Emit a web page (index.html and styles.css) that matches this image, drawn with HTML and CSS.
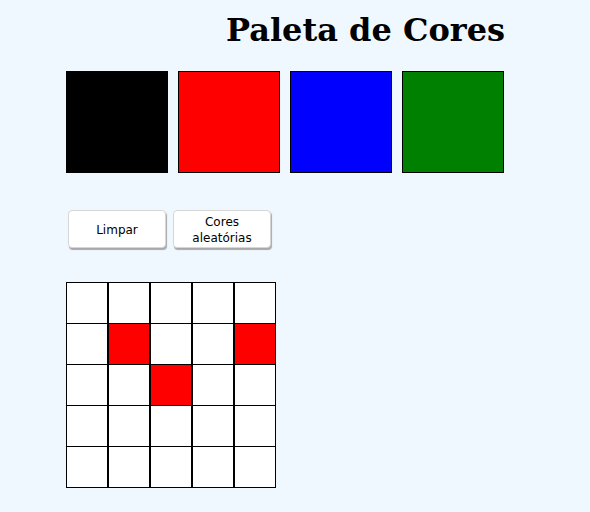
FILE: index.html
```html
<!DOCTYPE html>
<html lang="pt-BR">
<head>
<meta charset="utf-8">
<title>Paleta de Cores</title>
<link rel="stylesheet" href="styles.css">
</head>
<body>
<main class="page">
  <h1 class="title">Paleta de Cores</h1>
  <div class="palette">
    <div class="swatch black"></div>
    <div class="swatch red"></div>
    <div class="swatch blue"></div>
    <div class="swatch green"></div>
  </div>
  <div class="actions">
    <button class="btn" type="button">Limpar</button>
    <button class="btn" type="button">Cores aleatórias</button>
  </div>
  <div class="board">
    <div class="row"><div class="pixel"></div><div class="pixel"></div><div class="pixel"></div><div class="pixel"></div><div class="pixel"></div></div>
    <div class="row"><div class="pixel"></div><div class="pixel filled"></div><div class="pixel"></div><div class="pixel"></div><div class="pixel filled"></div></div>
    <div class="row"><div class="pixel"></div><div class="pixel"></div><div class="pixel filled"></div><div class="pixel"></div><div class="pixel"></div></div>
    <div class="row"><div class="pixel"></div><div class="pixel"></div><div class="pixel"></div><div class="pixel"></div><div class="pixel"></div></div>
    <div class="row"><div class="pixel"></div><div class="pixel"></div><div class="pixel"></div><div class="pixel"></div><div class="pixel"></div></div>
  </div>
</main>
</body>
</html>
```
FILE: styles.css
```css
html, body {
  margin: 0;
  padding: 0;
  background: #f0f8ff;
}

.page {
  padding-left: 66px;
}

.title {
  width: 439px;
  margin: 12px 0 0;
  font-family: "DejaVu Serif", serif;
  font-size: 32px;
  font-weight: bold;
  line-height: 37px;
  text-align: right;
  color: #000;
}

.palette {
  display: flex;
  gap: 10px;
  margin-top: 22px;
}

.swatch {
  width: 100px;
  height: 100px;
  border: 1px solid #000;
}

.black { background: #000; }
.red { background: #ff0000; }
.blue { background: #0000ff; }
.green { background: #008000; }

.actions {
  display: flex;
  gap: 7px;
  margin: 37px 0 0 2px;
}

.btn {
  width: 98px;
  height: 38px;
  padding: 1px 8px 0;
  background: #fff;
  border: 1px solid #d6d6d6;
  border-radius: 4px;
  box-shadow: 1px 2px 1px #a8a8a8;
  font-family: "DejaVu Sans", sans-serif;
  font-size: 12px;
  line-height: 16px;
  color: #000;
}

.board {
  display: flex;
  flex-direction: column;
  margin-top: 34px;
}

.row {
  display: flex;
}

.row + .row {
  margin-top: -1px;
}

.pixel {
  width: 40px;
  height: 40px;
  border: 1px solid #000;
  background: #fff;
}

.pixel.filled {
  background: #ff0000;
}
```
